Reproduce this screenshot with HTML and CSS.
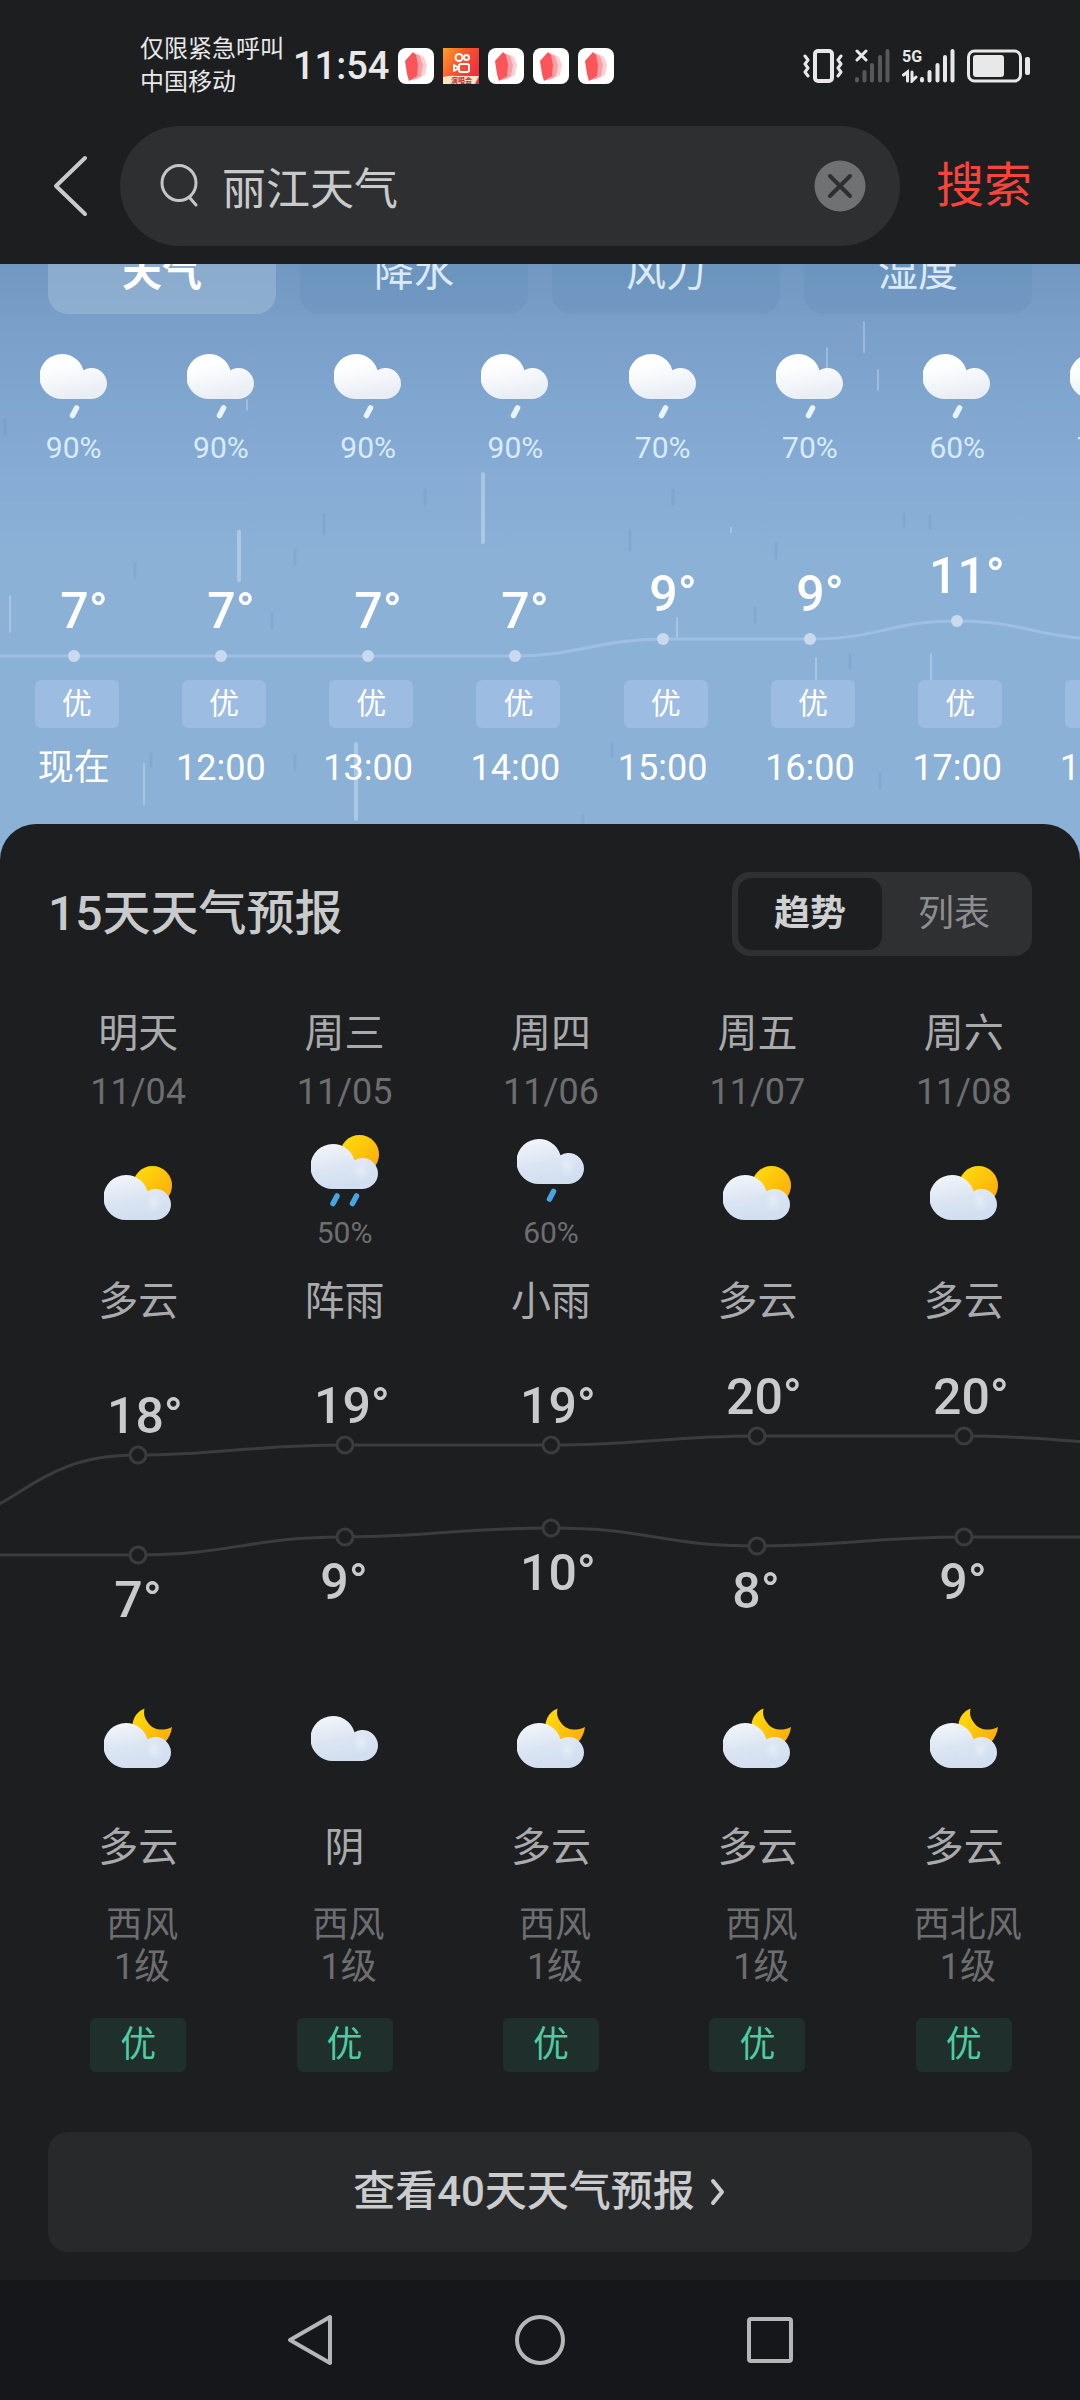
FILE: index.html
```html
<!DOCTYPE html>
<html lang="zh-CN">
<head>
<meta charset="utf-8">
<meta name="viewport" content="width=device-width, initial-scale=1">
<title>丽江天气</title>
<link rel="stylesheet" href="styles.css">
</head>
<body>
<svg class="defs" aria-hidden="true">
  <defs>
    <linearGradient id="cloud-white" x1="0" y1="0" x2="0.3" y2="1"><stop offset="0.3" stop-color="#fff"/><stop offset="1" stop-color="#e9eef5"/></linearGradient>
    <linearGradient id="cloud-grey" x1="0" y1="0" x2="0.3" y2="1"><stop offset="0" stop-color="#f5f7fc"/><stop offset="0.6" stop-color="#dbe5f2"/><stop offset="1" stop-color="#d2dff1"/></linearGradient>
    <radialGradient id="puff"><stop offset="0" stop-color="#f3f7fc" stop-opacity=".5"/><stop offset="1" stop-color="#e6edf7" stop-opacity="0"/></radialGradient>
    <linearGradient id="sun-fill" x1="0" y1="0" x2="1" y2="1"><stop offset="0.2" stop-color="#fed50c"/><stop offset="1" stop-color="#fda40c"/></linearGradient>
    <linearGradient id="video-fill" x1="0" y1="0" x2="1" y2="0.6"><stop offset="0" stop-color="#fba12c"/><stop offset="0.5" stop-color="#f9572a"/><stop offset="1" stop-color="#f02e42"/></linearGradient>
    <path id="cloud-shape" d="M22.5 45A22.5 22.5 0 1 1 43.5 16.2A15.5 15.5 0 1 1 51.5 45Z"/>
    <symbol id="cloud" viewBox="0 0 68 45"><use href="#cloud-shape" fill="url(#cloud-grey)"/><ellipse cx="50" cy="27" rx="9" ry="12" fill="url(#puff)"/></symbol>
    <symbol id="hour-rain" viewBox="0 0 68 68"><use href="#cloud-shape" fill="url(#cloud-white)"/><path d="M36.5 54L32.5 61.500" stroke="#e8f4ff" stroke-width="5.500" stroke-linecap="round"/></symbol>
    <symbol id="partly" viewBox="0 -9 68 54"><circle cx="48.500" cy="10.500" r="19.500" fill="url(#sun-fill)"/><use href="#cloud" width="68" height="45"/></symbol>
    <symbol id="shower" viewBox="0 -9 68 72"><circle cx="48.500" cy="10.500" r="19.500" fill="url(#sun-fill)"/><use href="#cloud" width="68" height="45"/><path d="M26 52L22 59.500M45.500 52L41.500 59.500" stroke="#47a5e4" stroke-width="5.500" stroke-linecap="round"/></symbol>
    <symbol id="light-rain" viewBox="0 -4 68 72"><use href="#cloud" width="68" height="45"/><path d="M36.500 52.500L32.500 60" stroke="#47a5e4" stroke-width="5.500" stroke-linecap="round"/></symbol>
    <symbol id="night" viewBox="0 -15 68 60"><path d="M40.500 -14.500C27 -9 24 8 36 20C48 32 66 22 68 4C58 9 49 6 45 1C40 -5 39.500 -9 40.500 -14.500Z" fill="url(#sun-fill)"/><use href="#cloud" width="68" height="45"/></symbol>
    <symbol id="note-app" viewBox="0 0 36 36"><rect width="36" height="36" rx="8" fill="#fff"/><path d="M20 6l6 3 3 8-2 10-8 4-6 1z" fill="#fbd0d2"/><path d="M17 5l5 3 3 9-2 11-5 3-6 1z" fill="#f8a0a5"/><path d="M15 4l3 3 2 10-1 11-8 5-2-7-2-13z" fill="#fb5459"/></symbol>
  </defs>
</svg>

<header class="header">
  <div class="status">
    <div class="carrier"><span>仅限紧急呼叫</span><span>中国移动</span></div>
    <time class="clock">11:54</time>
    <div class="apps">
      <svg width="36" height="36"><use href="#note-app"/></svg>
      <svg width="36" height="36" viewBox="0 0 36 36"><path fill="url(#video-fill)" d="M0 0h36v36H0z"/><g fill="none" stroke="#fff" stroke-width="2" stroke-linejoin="round"><circle cx="16" cy="9.500" r="3.500"/><circle cx="23.500" cy="9.500" r="2.500"/><rect x="16" y="16" width="10" height="8" rx="2"/><path d="M16 20l-5-3v6z"/></g><path d="M0 29q8-2 14-1h22l-4 8H0z" fill="#fbe3c4"/><text x="8" y="35" class="app-label">演唱会</text></svg>
      <svg width="36" height="36"><use href="#note-app"/></svg>
      <svg width="36" height="36"><use href="#note-app"/></svg>
      <svg width="36" height="36"><use href="#note-app"/></svg>
    </div>
    <div class="indicators">
      <svg width="40" height="34" viewBox="0 0 40 34" fill="none" stroke="#e8e8e8" stroke-linecap="round" stroke-linejoin="round"><rect x="12" y="2" width="17" height="30" rx="3" stroke-width="4"/><path d="M2 7l3 4-3 4 3 4-3 4 3 4M38 7l-3 4 3 4-3 4 3 4-3 4" stroke-width="3"/></svg>
      <svg width="35" height="34" viewBox="0 0 35 34" fill="none" stroke-linecap="round"><path d="M2 2l9 9M11 2l-9 9" stroke="#e8e8e8" stroke-width="3"/><path d="M2 30v1.500M9.500 23v8.500M17 16v15.500M25 8v23.500M32.500 2v29.500" stroke="#57585a" stroke-width="4"/></svg>
      <svg width="53" height="34" viewBox="0 0 53 34" fill="none" stroke="#e8e8e8" stroke-linecap="round"><text x="0" y="13" class="net-label">5G</text><path d="M1.500 26l4-3v9M10 23v9l4-4" stroke-width="3"/><path d="M20 30v1.500M27.500 23v8.500M35.500 16v15.500M43 8v23.500M50.500 2v29.500" stroke-width="4"/></svg>
      <svg width="63" height="34" viewBox="0 0 63 34"><rect x="1.500" y="2" width="52" height="30" rx="6" fill="none" stroke="#e8e8e8" stroke-width="3"/><rect x="6" y="6" width="31" height="22" rx="3" fill="#e8e8e8"/><rect x="58" y="8" width="5" height="18" rx="2" fill="#e8e8e8"/></svg>
    </div>
  </div>
  <form class="search">
    <button type="button" class="back" aria-label="返回"><svg width="40" height="62" viewBox="0 0 40 62" fill="none" stroke="#c9cacc" stroke-width="4" stroke-linecap="round" stroke-linejoin="round"><path d="M37 3L8 31l29 28"/></svg></button>
    <div class="search-box">
      <svg width="40" height="44" viewBox="0 0 40 44" fill="none" stroke="#c4c5c7" stroke-width="3" stroke-linecap="round"><ellipse cx="19" cy="19" rx="17" ry="17.500"/><path d="M30 34l6 7"/></svg>
      <input class="search-input" type="text" value="丽江天气" aria-label="搜索内容">
      <button type="button" class="clear" aria-label="清除"><svg width="52" height="52" viewBox="0 0 52 52"><circle cx="26" cy="26" r="25.500" fill="#707173"/><path d="M16 16l20 20M36 16L16 36" stroke="#2e2f31" stroke-width="4" stroke-linecap="round"/></svg></button>
    </div>
    <button type="submit" class="submit">搜索</button>
  </form>
</header>

<main>
  <section class="hourly">
    <svg class="rain" viewBox="0 0 1080 560" preserveAspectRatio="none" aria-hidden="true" fill="none" stroke-linecap="round">
      <path d="M483 210v68M239 268v48M356 480v75" stroke="#fff" stroke-opacity=".3" stroke-width="4"/>
      <path d="M10 332v36M144 500v40M931 390v54M816 394v56M864 58v30M878 106v20M731 264v4M677 354v20M247 136v10M827 84v26" stroke="#fff" stroke-opacity=".25" stroke-width="2"/>
      <path d="M5 156v14M135 300v14M295 286v14M425 226v14M324 250v20M673 226v14M630 266v20M776 280v14M930 252v12M904 250v12M850 390v14M612 480v12M880 510v14M272 350v14M151 490v12M755 344v14M583 552v6M295 492v14" stroke="#5d86b3" stroke-opacity=".18" stroke-width="3"/>
    </svg>
    <div class="tabs">
      <button type="button" class="tab tab-on">天气</button>
      <button type="button" class="tab">降水</button>
      <button type="button" class="tab">风力</button>
      <button type="button" class="tab">湿度</button>
    </div>
    <ul class="hours hours-rain">
      <li><svg width="68" height="68"><use href="#hour-rain"/></svg><span>90%</span></li>
      <li><svg width="68" height="68"><use href="#hour-rain"/></svg><span>90%</span></li>
      <li><svg width="68" height="68"><use href="#hour-rain"/></svg><span>90%</span></li>
      <li><svg width="68" height="68"><use href="#hour-rain"/></svg><span>90%</span></li>
      <li><svg width="68" height="68"><use href="#hour-rain"/></svg><span>70%</span></li>
      <li><svg width="68" height="68"><use href="#hour-rain"/></svg><span>70%</span></li>
      <li><svg width="68" height="68"><use href="#hour-rain"/></svg><span>60%</span></li>
      <li><svg width="68" height="68"><use href="#hour-rain"/></svg><span>70%</span></li>
    </ul>
    <svg class="chart hour-chart" viewBox="0 0 1080 214">
      <path class="hour-line" d="M0 190H515C575 190 600 173 663 173H810C880 173 890 155 957 155S1040 173 1104 173"/>
      <g class="hour-dots"><circle cx="74" cy="190" r="6"/><circle cx="221" cy="190" r="6"/><circle cx="368" cy="190" r="6"/><circle cx="515" cy="190" r="6"/><circle cx="663" cy="173" r="6"/><circle cx="810" cy="173" r="6"/><circle cx="957" cy="155" r="6"/></g>
      <g class="hour-temps"><text x="84" y="162">7°</text><text x="231" y="162">7°</text><text x="378" y="162">7°</text><text x="525" y="162">7°</text><text x="673" y="145">9°</text><text x="820" y="145">9°</text><text x="967" y="127">11°</text></g>
    </svg>
    <ul class="hours hours-time">
      <li><span class="air">优</span><time>现在</time></li>
      <li><span class="air">优</span><time>12:00</time></li>
      <li><span class="air">优</span><time>13:00</time></li>
      <li><span class="air">优</span><time>14:00</time></li>
      <li><span class="air">优</span><time>15:00</time></li>
      <li><span class="air">优</span><time>16:00</time></li>
      <li><span class="air">优</span><time>17:00</time></li>
      <li><span class="air">优</span><time>18:00</time></li>
    </ul>
  </section>

  <section class="forecast">
    <div class="forecast-head">
      <h2>15天天气预报</h2>
      <div class="switch"><button type="button" class="switch-on">趋势</button><button type="button">列表</button></div>
    </div>
    <ul class="days">
      <li><span class="name">明天</span><time>11/04</time><div class="day-icon"><svg width="68" height="54"><use href="#partly"/></svg></div><span class="name">多云</span></li>
      <li><span class="name">周三</span><time>11/05</time><div class="day-icon"><svg width="68" height="72"><use href="#shower"/></svg><span class="chance">50%</span></div><span class="name">阵雨</span></li>
      <li><span class="name">周四</span><time>11/06</time><div class="day-icon"><svg width="68" height="72"><use href="#light-rain"/></svg><span class="chance">60%</span></div><span class="name">小雨</span></li>
      <li><span class="name">周五</span><time>11/07</time><div class="day-icon"><svg width="68" height="54"><use href="#partly"/></svg></div><span class="name">多云</span></li>
      <li><span class="name">周六</span><time>11/08</time><div class="day-icon"><svg width="68" height="54"><use href="#partly"/></svg></div><span class="name">多云</span></li>
    </ul>
    <svg class="chart" viewBox="0 0 1080 382">
      <g class="day-lines">
        <path d="M-68 210C30 175 40 129 138 129C220 129 250 119 345 119H551C640 119 670 110 757 110H964C1050 110 1080 119 1170 119"/>
        <path d="M0 229H138C230 229 250 211 345 211C430 211 460 202 551 202C650 202 660 220 757 220C850 220 870 211 964 211H1080"/>
      </g>
      <g class="day-dots"><circle cx="138" cy="129" r="8"/><circle cx="345" cy="119" r="8"/><circle cx="551" cy="119" r="8"/><circle cx="757" cy="110" r="8"/><circle cx="964" cy="110" r="8"/><circle cx="138" cy="229" r="8"/><circle cx="345" cy="211" r="8"/><circle cx="551" cy="202" r="8"/><circle cx="757" cy="220" r="8"/><circle cx="964" cy="211" r="8"/></g>
      <g class="day-temps"><text x="145" y="107">18°</text><text x="352" y="97">19°</text><text x="558" y="97">19°</text><text x="764" y="88">20°</text><text x="971" y="88">20°</text><text x="138" y="291">7°</text><text x="344" y="273">9°</text><text x="558" y="264">10°</text><text x="756" y="282">8°</text><text x="963" y="273">9°</text></g>
    </svg>
    <ul class="nights">
      <li><div class="night-icon"><svg width="68" height="60"><use href="#night"/></svg></div><span class="name">多云</span><p>西风<br>1级</p><span class="quality">优</span></li>
      <li><div class="night-icon"><svg width="68" height="45"><use href="#cloud"/></svg></div><span class="name">阴</span><p>西风<br>1级</p><span class="quality">优</span></li>
      <li><div class="night-icon"><svg width="68" height="60"><use href="#night"/></svg></div><span class="name">多云</span><p>西风<br>1级</p><span class="quality">优</span></li>
      <li><div class="night-icon"><svg width="68" height="60"><use href="#night"/></svg></div><span class="name">多云</span><p>西风<br>1级</p><span class="quality">优</span></li>
      <li><div class="night-icon"><svg width="68" height="60"><use href="#night"/></svg></div><span class="name">多云</span><p>西北风<br>1级</p><span class="quality">优</span></li>
    </ul>
    <a class="more" href="#forecast40"><span>查看40天天气预报</span><svg width="18" height="30" viewBox="0 0 18 30" fill="none" stroke="#cbccce" stroke-width="4" stroke-linecap="round" stroke-linejoin="round"><path d="M4 4l9 11-9 11"/></svg></a>
  </section>
</main>

<nav class="navbar">
  <button type="button" aria-label="返回"><svg width="52" height="54" viewBox="0 0 52 54"><path d="M46 4v46L6 27z"/></svg></button>
  <button type="button" aria-label="主页"><svg width="52" height="54" viewBox="0 0 52 54"><circle cx="26" cy="27" r="23"/></svg></button>
  <button type="button" aria-label="最近任务"><svg width="52" height="54" viewBox="0 0 52 54"><rect x="5" y="6" width="42" height="42" rx="2"/></svg></button>
</nav>
</body>
</html>
```

FILE: styles.css
```css
* { box-sizing: border-box; }

body {
  margin: 0;
  background: #1d1e20;
  color: #c9cacc;
  font-family: Roboto, "Noto Sans CJK SC", sans-serif;
}

button, input {
  margin: 0;
  padding: 0;
  border: 0;
  background: none;
  color: inherit;
  font: inherit;
}

ul { margin: 0; padding: 0; list-style: none; }
svg { display: block; flex: none; }
.defs { position: absolute; width: 0; height: 0; }

/* Status bar and search */
.status {
  display: flex;
  align-items: center;
  gap: 9px;
  padding: 33px 50px 27px 140px;
  color: #e8e8e8;
}

.carrier {
  display: flex;
  flex-direction: column;
  font-size: 24px;
  line-height: 33px;
  white-space: nowrap;
}

.clock { font-size: 38px; line-height: 48px; font-weight: 500; }
.apps { display: flex; gap: 9px; }
.app-label { fill: #c02d2d; font-size: 7px; font-weight: 700; }
.indicators { display: flex; gap: 12px; margin-left: auto; }
.net-label { fill: #e8e8e8; stroke: none; font-size: 16px; font-weight: 700; }

.search {
  display: flex;
  align-items: center;
  padding: 0 48px 18px;
}

.back { width: 72px; }

.search-box {
  display: flex;
  flex: 1;
  align-items: center;
  gap: 22px;
  min-width: 0;
  height: 120px;
  padding: 0 34px 0 40px;
  border-radius: 60px;
  background: #2e2f31;
}

.search-input {
  flex: 1;
  min-width: 0;
  height: 64px;
  outline: 0;
  font-size: 44px;
}

.submit {
  width: 132px;
  color: #f9443b;
  font-size: 48px;
  line-height: 60px;
  text-align: right;
}

/* Hour by hour */
.hourly {
  position: relative;
  overflow: hidden;
  padding-bottom: 78px;
  background: linear-gradient(#7098c1, #7a9fc9 60px, #7fa6cf 130px, #87acd5 220px, #8bb1d7 290px, #8bb1d7);
  color: #fff;
}

.rain { position: absolute; top: 0; left: 0; width: 100%; height: 560px; }

.tabs {
  display: flex;
  gap: 24px;
  margin-top: -34px;
  padding: 0 48px;
}

.tab {
  flex: 1;
  height: 84px;
  padding-top: 2px;
  border-radius: 20px;
  background: rgba(90, 140, 180, 0.24);
  color: #dceaf8;
  font-size: 40px;
  line-height: 48px;
}

.tab-on { background: rgba(170, 195, 220, 0.45); color: #fff; font-weight: 700; }

.hours { display: flex; position: relative; }

.hours li {
  display: flex;
  flex: 0 0 calc(100% * 3 / 22);
  flex-direction: column;
  align-items: center;
}

.hours-rain { padding-top: 40px; }
.hours-rain li { gap: 8px; color: #d9ebfc; font-size: 30px; line-height: 36px; }
.hours-time li { gap: 18px; font-size: 36px; line-height: 44px; }

.air {
  width: 84px;
  margin-left: 6px;
  border-radius: 6px;
  background: #9dbce2;
  font-size: 30px;
  line-height: 48px;
  text-align: center;
}

.chart { position: relative; width: 100%; height: auto; font-size: 50px; font-weight: 500; text-anchor: middle; }
.hour-line { fill: none; stroke: #9ec0e3; stroke-width: 3; }
.hour-dots { fill: #c9daef; }
.hour-temps { fill: #fff; }

/* Fifteen-day forecast */
.forecast {
  position: relative;
  margin-top: -44px;
  padding: 48px 0 28px;
  border-radius: 36px 36px 0 0;
  background: #1d1e20;
}

.forecast-head {
  display: flex;
  align-items: center;
  justify-content: space-between;
  margin-bottom: 54px;
  padding: 0 48px;
}

h2 { margin: 0; font-size: 48px; line-height: 60px; font-weight: 500; }

.switch {
  display: grid;
  grid-template-columns: 1fr 1fr;
  width: 300px;
  padding: 6px;
  border-radius: 18px;
  background: #2f3032;
}

.switch button { height: 72px; border-radius: 14px; color: #8d8e90; font-size: 36px; line-height: 44px; }
.switch .switch-on { background: #1d1e20; color: #cfd0d2; font-weight: 700; }

.days, .nights {
  display: grid;
  grid-template-columns: repeat(5, 1fr);
  padding: 0 13px 0 35px;
}

.days li, .nights li { display: flex; flex-direction: column; align-items: center; }
.name { color: #a9aaac; font-size: 40px; line-height: 48px; }
.days time { margin-top: 12px; color: #6d6e70; font-size: 36px; line-height: 44px; }

.day-icon {
  display: flex;
  flex-direction: column;
  align-items: center;
  justify-content: center;
  gap: 8px;
  height: 126px;
  margin: 16px 0 22px;
}

.chance { color: #6d6e70; font-size: 30px; line-height: 36px; }

.day-lines { fill: none; stroke: #3b3c3e; stroke-width: 3; }
.day-dots { fill: #1d1e20; stroke: #3b3c3e; stroke-width: 3; }
.day-temps { fill: #c9cacc; }

.night-icon { display: flex; align-items: center; height: 60px; margin-bottom: 56px; }

.nights p {
  margin: 32px 0 30px;
  padding-left: 8px;
  color: #6d6e70;
  font-size: 36px;
  line-height: 42px;
  text-align: center;
}

.quality {
  width: 96px;
  border-radius: 6px;
  background: #1e2f2c;
  color: #4fcb9f;
  font-size: 36px;
  line-height: 54px;
  text-align: center;
}

.more {
  display: flex;
  align-items: center;
  justify-content: center;
  gap: 14px;
  height: 120px;
  margin: 60px 48px 0;
  border-radius: 20px;
  background: #28292b;
  color: #cbccce;
  font-size: 42px;
  line-height: 48px;
  font-weight: 500;
  text-decoration: none;
}

.navbar { display: flex; justify-content: center; background: #15171a; }
.navbar button { display: flex; align-items: center; justify-content: center; width: 230px; height: 120px; }
.navbar svg { fill: none; stroke: #b5b6b8; stroke-width: 4; stroke-linejoin: round; }
```
